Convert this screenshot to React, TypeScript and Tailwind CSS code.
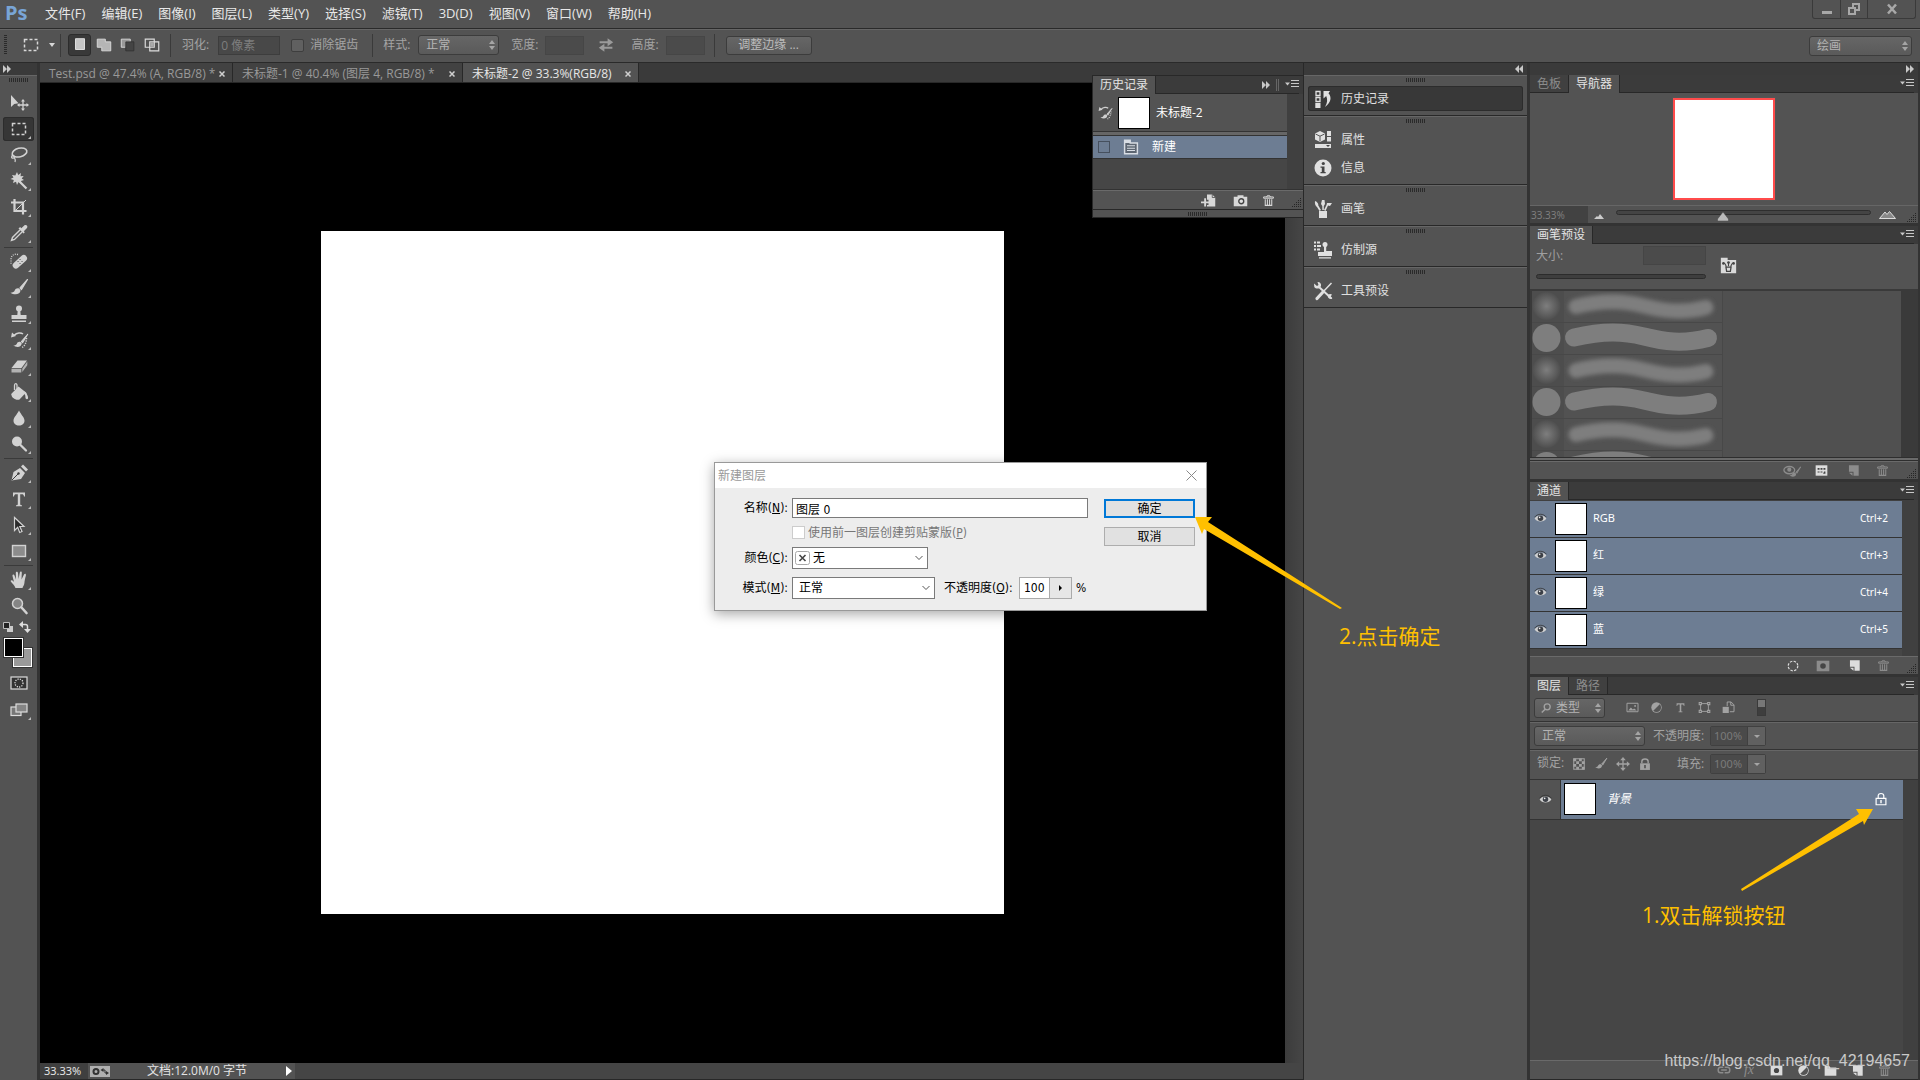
import type { ReactNode } from 'react'
import clsx from 'clsx'

const MENUS = ['文件(F)', '编辑(E)', '图像(I)', '图层(L)', '类型(Y)', '选择(S)', '滤镜(T)', '3D(D)', '视图(V)', '窗口(W)', '帮助(H)']

const TABS = [
  { title: 'Test.psd @ 47.4% (A, RGB/8) *', width: 'w-[193px]' },
  { title: '未标题-1 @ 40.4% (图层 4, RGB/8) *', width: 'w-[230px]' },
  { title: '未标题-2 @ 33.3%(RGB/8)', width: 'w-[176px]', active: true },
]

const CHANNELS = [
  { name: 'RGB', key: 'Ctrl+2' },
  { name: '红', key: 'Ctrl+3' },
  { name: '绿', key: 'Ctrl+4' },
  { name: '蓝', key: 'Ctrl+5' },
]

function Svg({ children, className = 'size-5' }: { children: ReactNode; className?: string }) {
  return (
    <svg viewBox="0 0 20 20" className={clsx('shrink-0', className)} fill="currentColor" aria-hidden="true">
      {children}
    </svg>
  )
}

const line = { fill: 'none', stroke: 'currentColor' }

const brushShape = (
  <>
    <path d="M18.5 1.5 11 10l1.5 1.5z" stroke="currentColor" strokeWidth="1.2" strokeLinejoin="round" />
    <path d="M10 10.5c-2-.6-3.600.4-4.300 2-.6 1.500-1.900 2-4.200 2.200 2.500 1.800 6.300 2.300 8.500.6 1.500-1.200 1.400-2.600 1.400-3.400z" />
  </>
)

const icons: Record<string, ReactNode> = {
  move: (
    <>
      <path d="M2 2v12l3.200-3 4.300-.8z" />
      <path d="M14 7.500v9M9.500 12h9" {...line} strokeWidth="1.300" />
      <path d="m14 6 2 2.500h-4zM14 18l2-2.500h-4zM8 12l2.500-2v4zM20 12l-2.500-2v4z" />
    </>
  ),
  marquee: <rect x="3.500" y="4.500" width="13" height="11" {...line} strokeDasharray="3 2" strokeWidth="1.500" />,
  lasso: (
    <>
      <ellipse cx="10.500" cy="7.500" rx="7.500" ry="4.300" {...line} strokeWidth="1.600" transform="rotate(-14 10.500 7.500)" />
      <path d="M4 10.500c-2 .4-1.800 3 .3 2.600 1.800-.4 1.200-2.200 0-1.800M5.500 13c1 1.500 1.200 2.500.5 4" {...line} strokeWidth="1.300" />
    </>
  ),
  wand: (
    <>
      <path d="m8 1 1.200 3L12 2l-.5 3.300 3.200-.3-2 2.500 2.300 1.500-3 1 .5 3L9.500 11 8 14l-1-3.200L4 12l.8-3L1.500 8l3-1.500L3 4l3.300.5z" />
      <path d="m10 10 7.500 7.500" {...line} strokeWidth="2.200" />
    </>
  ),
  crop: (
    <>
      <path d="M5.500 2v12h12M2 5.500h12v12" {...line} strokeWidth="2.200" />
      <path d="m6 14 11-11" {...line} strokeWidth="1" />
    </>
  ),
  dropper: (
    <>
      <path d="m11 7-7.500 7.500L2.500 17.500l3-1L13 9" {...line} strokeWidth="1.400" />
      <path d="m9.500 5.500 5 5 1.300-1.300-1-1L18 5c1-1.300 0-3.500-2.200-3L12.300 5.300l-1.200-1.200z" />
    </>
  ),
  heal: (
    <>
      <rect x="2.500" y="6.500" width="17" height="6.500" rx="3.200" transform="rotate(-42 11 10)" />
      <path d="M9 9.500h.1M11 11.500h.1M11 7.500h.1M13 9.500h.1" stroke="#535353" strokeWidth="1.200" strokeLinecap="round" />
      <path d="M9 2.500C5 1.500 2 3.500 2 8v4" {...line} strokeDasharray="1 1.200" strokeWidth="1.300" />
    </>
  ),
  brush: brushShape,
  stamp: (
    <>
      <circle cx="10" cy="4.500" r="3" />
      <path d="M8.800 6h2.400l.5 5h5.800v4h-15v-4h5.800zM3 16.500h14V18H3z" />
    </>
  ),
  historyBrush: (
    <>
      <g transform="translate(3 3) scale(.85)">{brushShape}</g>
      <path d="M5 5.500c3-3 7-3 9-1.500" {...line} strokeWidth="1.500" />
      <path d="m2 7.500 1-5 4 3.500z" />
      <path d="M17.500 8c0 4-1.500 8-4.500 9.500" {...line} strokeDasharray="1.200 1.200" strokeWidth="1.500" />
    </>
  ),
  eraser: (
    <>
      <path d="m2.500 12 6-7.500h9.500L12.500 12z" />
      <path d="M2.500 12.800v3.700h9.800v-3.700zM13.300 12.400l5-7v3.800l-5 6.800z" opacity=".75" />
    </>
  ),
  bucket: (
    <>
      <path d="m9.500 4.500 7.500 6-6.500 7c-4 1.200-8-2-8.300-5.500z" />
      <path d="M8 10V3.500C8 1 5.500 1 5.500 3.500V8" {...line} strokeWidth="1.300" />
      <path d="M15 9.500c3 .5 3 3 3 3s1.500 2.500 1 4c-.6 1-2.200.8-2.500-.5-.2-1.500.3-3-1.500-4.500z" />
    </>
  ),
  drop: <path d="M10 2.500c2 4 5.500 7 5.500 10.200 0 3-2.500 4.800-5.500 4.800s-5.500-1.800-5.500-4.800C4.500 9.500 8 6.500 10 2.500z" />,
  dodge: (
    <>
      <circle cx="8" cy="7.500" r="5" />
      <path d="m11.500 11 5.500 5.500" {...line} strokeWidth="2.300" strokeLinecap="round" />
    </>
  ),
  pen: (
    <>
      <path d="M2.500 17.500 4.500 9l6.500-4 5 5-4 6z" />
      <path d="m12 3.500 2-2 5 5-2 2z" />
      <path d="m3 17 6-6" stroke="#3c3c3c" strokeWidth="1" />
      <circle cx="9.500" cy="10.500" r="1.200" fill="#3c3c3c" />
    </>
  ),
  type: <path d="M4 3.500h12v4h-1c-.2-1.700-.8-2.300-2.300-2.300h-1.500v9.800c0 1 .4 1.200 1.800 1.200v1H7v-1c1.400 0 1.800-.2 1.800-1.200V5.200H7.300C5.800 5.200 5.200 5.800 5 7.500H4z" />,
  path: <path d="M5.500 2.500v13l3.200-3.200 2 5.200 2.300-1-2.200-5h4.200z" fill="#2b2b2b" stroke="currentColor" strokeWidth="1.200" />,
  rect: <rect x="3.500" y="4.500" width="13" height="11" fill="#8c8c8c" stroke="currentColor" strokeWidth="1.400" />,
  hand: (
    <path d="M6.500 18c-1-3-3.500-4.500-5-7 .8-1.300 2.200-.5 3.500 1L3.500 6c-.3-1.800 1.500-2.200 2-.5L7 9.500 6.800 3c0-1.800 2-1.800 2.200 0l.6 6L10.800 2.600c.3-1.700 2.200-1.400 2 .3L12.500 9.500 15 4.600c.8-1.500 2.300-.8 1.900.8-.8 3-1.300 5-1.500 7.600-.2 2-1.400 3.500-1.900 5z" />
  ),
  zoom: (
    <>
      <circle cx="8.500" cy="7.500" r="5" fill="#858585" stroke="currentColor" strokeWidth="1.500" />
      <path d="m12.500 11.500 5 5.500" {...line} strokeWidth="2.600" strokeLinecap="round" />
    </>
  ),
  quickMask: (
    <>
      <rect x="2" y="4" width="16" height="12" fill="#333" stroke="currentColor" strokeWidth="1.200" />
      <circle cx="10" cy="10" r="4" {...line} strokeDasharray="1.200 1.200" strokeWidth="1.300" />
    </>
  ),
  screen: (
    <>
      <rect x="2" y="8" width="10" height="8.500" fill="#777" stroke="currentColor" strokeWidth="1.200" />
      <rect x="7" y="5" width="11" height="8" fill="#858585" stroke="currentColor" strokeWidth="1.200" />
    </>
  ),
  history: (
    <>
      <path d="M3 2.500h4v4H3zM3 8.500h4v4H3z" {...line} strokeWidth="1.300" />
      <path d="M2.300 14h5.200v5H2.300z" />
      <path d="M10.500 2H17l-1.500 2.300c3.500 4.200 2.500 9.200-3.500 13.700 2.500-4 2.700-8 1.200-11L10.500 9.500z" />
    </>
  ),
  props: (
    <>
      <path d="m7 1 5 2.500v6L7 12 2 9.500v-6z" />
      <path d="M2.500 4 7 6.200 11.500 4M7 6.200v5" fill="none" stroke="#555" />
      <path d="M14 1h4v5h-4zM14 7h4v4.500h-4zM2 14h16v4H2z" />
      <path d="M13 15h4l-2 2z" fill="#444" />
    </>
  ),
  info: (
    <>
      <circle cx="10" cy="10" r="8.500" />
      <path d="M7.500 8.500h4V14h1.200v1.300H7.500V14h1.300V9.800H7.500z" fill="#444" />
      <circle cx="10.300" cy="5.500" r="1.600" fill="#444" />
    </>
  ),
  brushes: (
    <>
      <path d="M6 12h8v7H6zM2 2c2.500 1 3.500 2.500 3.300 4.500L8 11 6.500 12 4 8C2.500 7 1.500 5 2 2zM9 1h2.500l.5 4-1.200 2v4H9.300V7L8 5zM14 4h5l-2 3-2-.5L12.500 12 11 11l2.500-5z" />
    </>
  ),
  clone: (
    <>
      <path d="M1 1.500h2v2H1zM4 1.500h3v2H4zM1 5h2v2H1zM4 5h4v2H4zM1 8.500h2v2H1zM4 8.500h3v2H4z" />
      <circle cx="12" cy="4.500" r="2.500" />
      <path d="M11 6h2.200v5H19v5H5v-4h6zM6 17.200h12v1.400H6z" />
    </>
  ),
  tools: (
    <>
      <path d="m6 6 12 11" {...line} strokeWidth="2" strokeLinecap="round" />
      <path d="M1 2.500 4 5l1.500-1L4.500 1C7 .8 8.500 3 8 5 7 8 3 8.500 1.300 6zM19 13.500c-2-1.500-4.500 0-4.200 2 .5 2.500 3.200 3 4.700 1.500l-2.500-.5z" />
      <path d="M18.500 2 9 12" {...line} strokeWidth="1.500" />
      <path d="m10.500 10.500-6.500 7" {...line} strokeWidth="3.200" strokeLinecap="round" />
    </>
  ),
  eye: (
    <>
      <path d="M1 10c3-6 15-6 18 0-3 6-15 6-18 0z" fill="#d0d0d0" />
      <circle cx="10" cy="9.500" r="4.200" fill="#3c4047" />
      <circle cx="8.700" cy="8.200" r="1.300" fill="#eee" />
      <path d="M1 8c4-6 14-6 18 0" fill="none" stroke="#333" strokeWidth="1.200" />
    </>
  ),
  trash: (
    <>
      <path d="M2.500 4.500h15v2h-15zM7 4.500c0-3 6-3 6 0" {...line} strokeWidth="1.500" />
      <path d="M5 8v9.500h10V8M8.300 8v9M11.700 8v9" {...line} strokeWidth="1.600" />
    </>
  ),
  page: <path d="M3 2h15v16h-8v-6H3zM3 13.500h5.500V18z" />,
  mask: (
    <>
      <path d="M1 2.500h18v15H1z" />
      <circle cx="10" cy="10" r="4" fill="#454545" />
    </>
  ),
  lock: (
    <>
      <path d="M5.500 9V6.500c0-5 9-5 9 0V9" {...line} strokeWidth="2" />
      <path d="M3 9h14v9.500H3z" />
      <path d="M9 11.500h2V16H9z" fill="#444" />
    </>
  ),
  lockOutline: (
    <>
      <path d="M6 9V5.500c0-4.500 8-4.500 8 0V9M3 9.200h14v9H3z" {...line} strokeWidth="1.700" />
      <path d="M9 11.500h2V16H9z" />
    </>
  ),
  picture: (
    <>
      <path d="M1.500 3.500h17v13h-17z" {...line} strokeWidth="1.500" />
      <path d="m3.500 14.500 4-4.500 3 3 2-1.500 4 3z" />
      <circle cx="14" cy="7.500" r="1.500" />
    </>
  ),
  adjust: (
    <>
      <circle cx="10" cy="10" r="8" />
      <path d="M15 5A7 7 0 0 1 5 15z" fill="#555" />
    </>
  ),
  shape: (
    <>
      <path d="M4 4h12v12H4z" {...line} strokeWidth="1.400" />
      <path d="M1 1.500h5v5H1zM14 1.500h5v5h-5zM1 13.500h5v5H1zM14 13.500h5v5h-5z" />
      <path d="M2.700 3.200h1.600v1.600H2.700zM15.700 3.200h1.600v1.600h-1.600zM2.700 15.200h1.600v1.600H2.700zM15.700 15.200h1.600v1.600h-1.600z" fill="#535353" />
    </>
  ),
  smart: (
    <>
      <path d="M8 8V1.500h6l4.500 4.500v10.500H12M13.500 1.500V6.500h5" {...line} strokeWidth="1.500" />
      <path d="M1 9h9.500v9.500H1z" />
    </>
  ),
  checker: (
    <>
      <path d="M2.500 2.500h15v15h-15z" {...line} strokeWidth="1.500" />
      <path d="M2 2h4v4H2zM10 2h4v4h-4zM6 6h4v4H6zM14 6h4v4h-4zM2 10h4v4H2zM10 10h4v4h-4zM6 14h4v4H6zM14 14h4v4h-4z" />
    </>
  ),
  moveAll: (
    <>
      <path d="M10 3v14M3 10h14" {...line} strokeWidth="1.800" />
      <path d="m10 0 4 4.500H6zM10 20l4-4.500H6zM0 10l4.500-4v8zM20 10l-4.500-4v8z" />
    </>
  ),
  dashedCircle: <circle cx="10" cy="10" r="8" {...line} strokeDasharray="4 2.300" strokeWidth="2" />,
  folder: <path d="M1 3h7l2 2.500h9V18H1z" />,
  link: (
    <path d="M9 6H5C.5 6 .5 14 5 14h4M11 6h4c4.500 0 4.500 8 0 8h-4M6 10h8" {...line} strokeWidth="2" />
  ),
  eyeBrush: (
    <>
      <ellipse cx="7" cy="9" rx="6" ry="4" {...line} strokeWidth="1.500" />
      <circle cx="7" cy="8.500" r="2.300" />
      <g transform="translate(6 4) scale(.75)">{brushShape}</g>
    </>
  ),
  presetPage: (
    <>
      <path d="M1 2h18v16H1z" />
      <path d="M4 6h3v3H4zM8.500 6h3v3h-3zM13 6h3v3h-3zM4 11.500h3V13H4zM8.500 11.500h3V13h-3zM14 11.500h2V15h-3.500z" fill="#444" />
    </>
  ),
  brushFolder: (
    <>
      <path d="M1 1h8v2.500h10V19H1z" />
      <path d="M7 12h6l-.8 5H7.800z" fill="none" stroke="#444" strokeWidth="1.500" />
      <path d="M4 7c2 0 2.500 1 3.500 4.500M10 6v5M16 7c-2 0-2.500 1-3.500 4.500" fill="none" stroke="#444" strokeWidth="1.300" />
      <circle cx="4" cy="7.500" r="1.500" fill="#444" />
      <circle cx="10" cy="6.500" r="1.600" fill="#444" />
      <circle cx="16" cy="7.500" r="1.500" fill="#444" />
    </>
  ),
  camera: (
    <>
      <path d="M1 5h5V3h8v2h5v12.500H1z" />
      <circle cx="11" cy="11" r="3.300" fill="#e0e0e0" stroke="#444" strokeWidth="1.800" />
    </>
  ),
  newDoc: (
    <>
      <path d="M8 2h7l4 4v12H8v-2h2v-7H8z" />
      <path d="M15 2v4h4" fill="none" stroke="#444" />
      <path d="M5.500 7v11M0 12.500h11" {...line} strokeWidth="2.500" />
    </>
  ),
  sheet: (
    <>
      <path d="M2 1.500h7V5h9v13.500H2z" fill="#5d6672" stroke="currentColor" strokeWidth="1.800" />
      <path d="M2 1.500h7V5H2z" />
      <path d="M5 8.500h10M5 11.500h10M5 14.500h10" {...line} strokeWidth="1.300" />
    </>
  ),
  search: (
    <>
      <circle cx="12" cy="8" r="5" {...line} strokeWidth="2.200" />
      <path d="m8.500 12-5.500 5.500" {...line} strokeWidth="2.500" />
    </>
  ),
  swap: (
    <>
      <path d="M2 6.500h12M18 13.500H6" {...line} strokeWidth="2.400" />
      <path d="m12 1.500 7 5-7 5zM8 8.500l-7 5 7 5z" />
    </>
  ),
}

const TOOL_GROUPS = [
  [
    { id: 'move', label: '移动工具' },
    { id: 'marquee', label: '矩形选框工具', more: true, active: true },
    { id: 'lasso', label: '套索工具', more: true },
    { id: 'wand', label: '魔棒工具', more: true },
    { id: 'crop', label: '裁剪工具', more: true },
    { id: 'dropper', label: '吸管工具', more: true },
  ],
  [
    { id: 'heal', label: '修复画笔工具', more: true },
    { id: 'brush', label: '画笔工具', more: true },
    { id: 'stamp', label: '仿制图章工具', more: true },
    { id: 'historyBrush', label: '历史记录画笔工具', more: true },
    { id: 'eraser', label: '橡皮擦工具', more: true },
    { id: 'bucket', label: '油漆桶工具', more: true },
    { id: 'drop', label: '模糊工具', more: true },
    { id: 'dodge', label: '减淡工具', more: true },
  ],
  [
    { id: 'pen', label: '钢笔工具', more: true },
    { id: 'type', label: '文字工具', more: true },
    { id: 'path', label: '路径选择工具', more: true },
    { id: 'rect', label: '矩形工具', more: true },
  ],
  [
    { id: 'hand', label: '抓手工具', more: true },
    { id: 'zoom', label: '缩放工具' },
  ],
]

const DOCK = [
  [{ id: 'history', label: '历史记录', active: true }],
  [{ id: 'props', label: '属性' }, { id: 'info', label: '信息' }],
  [{ id: 'brushes', label: '画笔' }],
  [{ id: 'clone', label: '仿制源' }],
  [{ id: 'tools', label: '工具预设' }],
]

function Grip() {
  return <div className="h-[4px] w-[20px] bg-[repeating-linear-gradient(90deg,#2a2a2a_0_1px,transparent_1px_2px)]" />
}

function Chevrons({ left }: { left?: boolean }) {
  return (
    <svg viewBox="0 0 8 8" className="h-[8px] w-[8px]" fill="#c8c8c8" aria-hidden="true">
      {left ? <path d="M4 0v8L0 4zM8 0v8L4 4z" /> : <path d="M0 0v8l4-4zM4 0v8l4-4z" />}
    </svg>
  )
}

function PanelMenu() {
  return (
    <button aria-label="面板菜单" className="flex h-[14px] w-[14px] items-center">
      <svg viewBox="0 0 14 9" className="h-[9px] w-[14px]" aria-hidden="true">
        <path d="M0 2.500h5L2.500 5.500z" fill="#c8c8c8" />
        <path d="M6 .5h8M6 3.500h8M6 6.500h8" stroke="#c8c8c8" />
      </svg>
    </button>
  )
}

function Resize() {
  return (
    <svg viewBox="0 0 10 10" className="h-[10px] w-[10px]" fill="#262626" aria-hidden="true">
      <path d="M8 0h1v1H8zM6 2h1v1H6zM8 2h1v1H8zM4 4h1v1H4zM6 4h1v1H6zM8 4h1v1H8zM2 6h1v1H2zM4 6h1v1H4zM6 6h1v1H6zM8 6h1v1H8zM0 8h1v1H0zM2 8h1v1H2zM4 8h1v1H4zM6 8h1v1H6zM8 8h1v1H8z" />
    </svg>
  )
}

function PanelTabs({ tabs, active = 0, children }: { tabs: string[]; active?: number; children?: ReactNode }) {
  return (
    <div className="flex h-[18px] shrink-0 items-stretch bg-[#3b3b3b] pr-1">
      {tabs.map((t, i) => (
        <button
          key={t}
          className={clsx(
            'border-r border-[#282828] px-[7px] leading-4',
            i === active ? 'bg-[#535353] text-[#e4e4e4]' : 'border-b bg-[#404040] text-[#8c8c8c]'
          )}
        >
          {t}
        </button>
      ))}
      <div className="flex flex-1 items-center justify-end border-b border-[#282828]">
        {children}
        <PanelMenu />
      </div>
    </div>
  )
}

function Updown() {
  return (
    <svg viewBox="0 0 6 10" className="pointer-events-none absolute top-1/2 right-1 h-[10px] w-[6px] -translate-y-1/2" fill="#a5a5a5" aria-hidden="true">
      <path d="M3 0l3 4H0zM3 10l3-4H0z" />
    </svg>
  )
}

function DarkSelect({ label, value, className, pad = 'pl-[7px]' }: { label: string; value: string; className: string; pad?: string }) {
  return (
    <div className={clsx('relative', className)}>
      <select
        aria-label={label}
        className={clsx('h-[20px] w-full appearance-none rounded-[3px] border border-[#3c3c3c] bg-linear-to-b from-[#666] to-[#5a5a5a] leading-4 text-[#b4b4b4]', pad)}
      >
        <option>{value}</option>
      </select>
      <Updown />
    </div>
  )
}

function PanelFooter({ children, className }: { children: ReactNode; className?: string }) {
  return (
    <div className={clsx('flex shrink-0 items-center justify-end border-t border-[#6a6a6a] bg-[#535353] text-[#8c8c8c]', className ?? 'h-[18px]')}>
      {children}
    </div>
  )
}

function MenuBar() {
  return (
    <header className="flex h-[29px] shrink-0 items-center justify-between border-b border-[#2a2a2a] pr-1">
      <div className="flex items-center pb-[2px]">
        <span className="w-[45px] pl-[5px] font-['Open_Sans',sans-serif] text-[20px] leading-6 font-bold text-[#79a5d6]">Ps</span>
        <nav className="flex gap-4 text-[13px] text-[#e8e8e8]">
          {MENUS.map(m => (
            <button key={m} className="leading-5">{m}</button>
          ))}
        </nav>
      </div>
      <div className="flex h-[19px] self-start rounded-b-[3px] border border-t-0 border-[#3a3a3a] text-[#a8a8a8]">
        <button aria-label="最小化" className="flex w-[28px] items-end justify-center border-r border-[#3a3a3a] pb-1">
          <span className="h-[3px] w-[10px] bg-[#a8a8a8]" />
        </button>
        <button aria-label="还原" className="flex w-[27px] items-center justify-center border-r border-[#3a3a3a]">
          <svg viewBox="0 0 12 12" className="size-3" fill="none" stroke="currentColor" strokeWidth="2" aria-hidden="true">
            <path d="M1 5h6v6H1zM5 4V1h6v6H8" />
          </svg>
        </button>
        <button aria-label="关闭" className="flex w-[47px] items-center justify-center">
          <svg viewBox="0 0 12 12" className="size-3" fill="none" stroke="currentColor" strokeWidth="2.500" aria-hidden="true">
            <path d="m2 1.500 8 9M10 1.500l-8 9" />
          </svg>
        </button>
      </div>
    </header>
  )
}

function Divider() {
  return <div className="h-[23px] w-px bg-[#3a3a3a]" />
}

const MODES = [
  { label: '新选区', art: <path d="M5 3h10v12H5z" fill="#c4c4c4" stroke="#e6e6e6" /> },
  { label: '添加到选区', art: <path d="M2.500 3.500h9v3h6v10h-10v-4h-5z" fill="#b5b5b5" stroke="#ddd" /> },
  { label: '从选区减去', art: <><path d="M2.500 3.500h10v3h-5v6h-5z" fill="#999" stroke="#ddd" /><path d="M7.500 6.500h9v10h-9z" fill="#444" stroke="#333" /></> },
  { label: '与选区交叉', art: <><path d="M2.500 3.500h10v9h-10zM7.500 6.500h10v10h-10z" fill="none" stroke="#ddd" strokeWidth="1.300" /><path d="M8 7h4v5H8z" fill="#aaa" /></> },
]

function OptionsBar() {
  return (
    <div className="flex h-[34px] shrink-0 items-center justify-between border-t border-b border-t-[#666] border-b-[#2a2a2a] pr-2 text-[#a4a4a4]">
      <div className="flex items-center pb-[2px]">
        <div className="ml-[4px] h-[20px] w-[3px] bg-[repeating-linear-gradient(180deg,#2a2a2a_0_1px,transparent_1px_2px)]" />
        <button aria-label="工具预设选取器" className="mr-[5px] ml-[14px] flex items-center gap-[8px] text-[#d8d8d8]">
          <Svg>{icons.marquee}</Svg>
          <svg viewBox="0 0 6 4" className="h-[4px] w-[6px]" fill="currentColor" aria-hidden="true"><path d="M0 0h6L3 4z" /></svg>
        </button>
        <Divider />
        <div className="mx-[7px] flex gap-[1px]">
          {MODES.map((m, i) => (
            <button
              key={m.label}
              aria-label={m.label}
              className={clsx('flex h-[22px] w-[23px] items-center justify-center rounded-[3px]', i === 0 && 'border border-[#2c2c2c] bg-[#393939]')}
            >
              <svg viewBox="0 0 20 20" className="h-[18px] w-[18px]" aria-hidden="true">{m.art}</svg>
            </button>
          ))}
        </div>
        <Divider />
        <label className="ml-[11px] flex items-center gap-[9px]">
          羽化:
          <input defaultValue="0 像素" className="h-[19px] w-[62px] border border-[#3d3d3d] bg-[#484848] px-[2px] text-[#7e7e7e]" />
        </label>
        <label className="mr-[14px] ml-[11px] flex items-center gap-[6px]">
          <input type="checkbox" disabled className="size-[13px] appearance-none rounded-[2px] border border-[#3e3e3e] bg-[#606060]" />
          消除锯齿
        </label>
        <Divider />
        <span className="mr-[8px] ml-[10px]">样式:</span>
        <DarkSelect label="样式" value="正常" className="w-[81px]" />
        <label className="ml-[12px] flex items-center gap-[7px]">
          宽度:
          <input className="h-[19px] w-[39px] border border-[#464646] bg-[#4b4b4b]" />
        </label>
        <button aria-label="高度和宽度互换" className="mr-[17px] ml-[14px] text-[#9a9a9a]"><Svg className="size-4">{icons.swap}</Svg></button>
        <label className="flex items-center gap-[7px]">
          高度:
          <input className="h-[19px] w-[39px] border border-[#464646] bg-[#4b4b4b]" />
        </label>
        <div className="mr-[11px] ml-[9px]"><Divider /></div>
        <button className="h-[19px] w-[86px] rounded-[3px] border border-[#3c3c3c] bg-linear-to-b from-[#666] to-[#5a5a5a] leading-4 text-[#bcbcbc]">调整边缘 ...</button>
      </div>
      <DarkSelect label="工作区" value="绘画" className="w-[103px]" />
    </div>
  )
}

function Toolbar() {
  return (
    <aside className="flex w-[40px] shrink-0 flex-col border-r-[3px] border-[#333] bg-[#535353]">
      <div className="flex h-[12px] items-center bg-[#3a3a3a] pl-[3px]"><Chevrons /></div>
      <div className="flex h-[15px] items-start justify-center border-t border-[#666] pt-[2px]"><Grip /></div>
      {TOOL_GROUPS.map((group, g) => (
        <div key={g} className="flex flex-col">
          {g > 0 && <div className="mx-[4px] my-[1px] h-px bg-[#3a3a3a]" />}
          {group.map(t => (
            <button
              key={t.id}
              aria-label={t.label}
              className={clsx(
                'relative mx-[3px] my-[1px] flex h-[24px] w-[31px] items-center justify-center rounded-[3px] text-[#d2d2d2]',
                t.active && 'bg-[#363636] ring-1 ring-[#2c2c2c] ring-inset'
              )}
            >
              <Svg className="size-5">{icons[t.id]}</Svg>
              {t.more && (
                <svg viewBox="0 0 3 3" className="absolute right-[3px] bottom-[2px] h-[3px] w-[3px]" fill="#bbb" aria-hidden="true"><path d="M3 0v3H0z" /></svg>
              )}
            </button>
          ))}
        </div>
      ))}
      <div className="flex h-[16px] items-center justify-between px-[3px] text-[#ddd]">
        <button aria-label="默认前景色和背景色">
          <svg viewBox="0 0 10 10" className="size-[10px]" aria-hidden="true"><path d="M4 4h6v6H4z" fill="#ccc" /><path d="M.5.5h6v6h-6z" fill="#222" stroke="#bbb" /></svg>
        </button>
        <button aria-label="切换前景色和背景色" className="pr-[3px]">
          <svg viewBox="0 0 12 12" className="size-3" fill="currentColor" aria-hidden="true"><path d="M3 3.500h3.500c1.500 0 2 1 2 2V8" fill="none" stroke="currentColor" strokeWidth="1.500" /><path d="M0 3.500 4 0v7zM8.500 12 5 8h7z" /></svg>
        </button>
      </div>
      <div className="relative mx-[3px] mt-[3px] mb-[4px] h-[29px]">
        <button aria-label="背景色" className="absolute right-[2px] bottom-0 size-[19px] border border-white bg-[#9a9a9a] outline outline-[#333]" />
        <button aria-label="前景色" className="absolute top-0 left-[1px] size-[19px] border border-white bg-black outline outline-[#333]" />
      </div>
      <button aria-label="快速蒙版" className="flex h-[24px] items-center justify-center text-[#dcdcdc]"><Svg className="size-5">{icons.quickMask}</Svg></button>
      <button aria-label="屏幕模式" className="relative flex h-[28px] items-center justify-center text-[#dcdcdc]">
        <Svg className="size-5">{icons.screen}</Svg>
        <svg viewBox="0 0 3 3" className="absolute right-[6px] bottom-[3px] h-[3px] w-[3px]" fill="#bbb" aria-hidden="true"><path d="M3 0v3H0z" /></svg>
      </button>
    </aside>
  )
}

function HistoryPanel() {
  return (
    <section className="absolute top-[12px] right-0 flex w-[211px] flex-col border border-r-0 border-[#282828] bg-[#535353]">
      <PanelTabs tabs={['历史记录']}>
        <Chevrons />
        <div className="mx-[6px] h-[12px] w-[3px] border-x border-[#666]" />
      </PanelTabs>
      <div className="flex border-b border-[#333] bg-[#404040]">
        <div className="mr-[16px] flex-1 bg-[#464646] text-white">
          <div className="flex h-[37px] items-center bg-[#535353] pl-[4px]">
            <Svg className="size-4 text-[#d0d0d0]">{icons.historyBrush}</Svg>
            <div className="mr-[6px] ml-[5px] size-[32px] border border-black bg-white" />
            未标题-2
          </div>
          <div className="h-[5px] border-y border-[#333] bg-[#666]" />
          <div className="flex h-[23px] items-center border-b border-[#333] bg-[#6d7d93] pl-[5px]">
            <input type="checkbox" aria-label="历史记录画笔的源" className="size-[12px] appearance-none border border-[#46505e] bg-[#6d7d93]" />
            <Svg className="mr-[13px] ml-[13px] size-4 text-[#d8dde4]">{icons.sheet}</Svg>
            新建
          </div>
          <div className="h-[30px]" />
        </div>
      </div>
      <PanelFooter className="h-[19px] text-[#d8d8d8]">
        <button aria-label="从当前状态创建新文档"><Svg className="size-[15px]">{icons.newDoc}</Svg></button>
        <button aria-label="创建新快照" className="ml-[17px]"><Svg className="size-[15px]">{icons.camera}</Svg></button>
        <button aria-label="删除" className="mr-[17px] ml-[14px]"><Svg className="size-[13px]">{icons.trash}</Svg></button>
        <div className="mt-[6px] mr-px"><Resize /></div>
      </PanelFooter>
      <div className="flex h-[8px] items-center justify-center border-t border-[#282828]"><Grip /></div>
    </section>
  )
}

function DocumentArea() {
  return (
    <main className="relative flex min-w-0 flex-1 flex-col bg-[#3a3a3a]">
      <div className="flex h-[20px] shrink-0 border-b border-[#282828]">
        {TABS.map(t => (
          <div
            key={t.title}
            className={clsx(
              'flex items-center justify-between border-r border-[#282828] pt-[2px] pr-[7px] pl-[9px] whitespace-nowrap',
              t.width,
              t.active ? 'bg-[#535353] text-[#e6e6e6]' : 'bg-[#424242] text-[#999]'
            )}
          >
            <button className="text-[12px] leading-4">{t.title}</button>
            <button aria-label="关闭标签">
              <svg viewBox="0 0 6 6" className="size-[6px]" stroke="#d0d0d0" strokeWidth="1.500" aria-hidden="true"><path d="m.5.5 5 5M5.500.5l-5 5" /></svg>
            </button>
          </div>
        ))}
      </div>
      <div className="flex min-h-0 flex-1">
        <div className="flex min-w-0 flex-1 items-center justify-center bg-black pb-px">
          <div className="aspect-square w-[683px] bg-white" />
        </div>
        <div className="w-[18px] bg-linear-to-r from-[#3c3c3c] to-[#464646]" />
      </div>
      <div className="flex h-[17px] shrink-0 items-stretch border-b border-[#282828] bg-[#454545] text-[#e4e4e4]">
        <div className="flex w-[48px] items-center bg-[#3f3f3f] pl-[4px] font-['Noto_Sans',sans-serif] text-[11px] leading-4">33.33%</div>
        <div className="flex w-[207px] items-center bg-[#535353] pr-[3px] pl-[2px]">
          <svg viewBox="0 0 20 11" className="h-[11px] w-[20px]" aria-hidden="true">
            <path d="M0 0h20v11H0z" fill="#b0b0b0" />
            <circle cx="6" cy="5.500" r="2.500" fill="none" stroke="#333" strokeWidth="2" />
            <path d="m10.500 4 3-2v4zM19 7l-3 2V5z" fill="#333" />
            <path d="M13 4h2v3h2" fill="none" stroke="#333" />
          </svg>
          <span className="ml-[37px] flex-1 leading-4 whitespace-nowrap">文档:12.0M/0 字节</span>
          <svg viewBox="0 0 6 10" className="h-[10px] w-[6px]" fill="#fff" aria-hidden="true"><path d="M0 0l6 5-6 5z" /></svg>
        </div>
      </div>
      <HistoryPanel />
    </main>
  )
}

function Dock() {
  return (
    <aside className="flex w-[224px] shrink-0 flex-col border-l border-[#282828] bg-[#535353] text-[#e0e0e0]">
      <div className="flex h-[12px] items-center justify-end bg-[#3a3a3a] pr-[4px]"><Chevrons left /></div>
      {DOCK.map((items, i) => (
        <div key={i} className="flex flex-col items-stretch border-t border-b border-t-[#666] border-b-[#282828] px-[4px] pt-[2px] pb-[4px]">
          <div className="mb-[4px] flex justify-center"><Grip /></div>
          <div className="flex flex-col gap-[3px]">
            {items.map(it => (
              <button
                key={it.label}
                className={clsx('flex h-[25px] items-center gap-[8px] rounded-[3px] pl-[5px]', it.active && 'bg-[#383838] ring-1 ring-[#2c2c2c] ring-inset')}
              >
                <Svg className="size-5">{icons[it.id]}</Svg>
                <span className="leading-4">{it.label}</span>
              </button>
            ))}
          </div>
        </div>
      ))}
    </aside>
  )
}

function Navigator() {
  return (
    <section>
      <PanelTabs tabs={['色板', '导航器']} active={1} />
      <div className="flex h-[112px] justify-center bg-[#535353] pt-[4px]">
        <div className="mt-px size-[102px] border-2 border-[#ff4b4b] bg-white outline outline-[#555]" />
      </div>
      <div className="flex h-[18px] items-center border-t border-[#666] bg-[#535353]">
        <input aria-label="缩放" defaultValue="33.33%" className="h-[17px] w-[58px] bg-[#424242] pl-px font-['Noto_Sans',sans-serif] text-[10px] text-[#7e7e7e]" />
        <svg viewBox="0 0 10 5" className="mt-[3px] mr-[12px] ml-[6px] h-[5px] w-[10px]" fill="#ccc" aria-hidden="true"><path d="M0 5l3-3 1 1 2-3 4 5z" /></svg>
        <div className="relative mb-[4px] flex flex-1 items-start">
          <div className="h-[5px] w-full rounded-full border border-[#2e2e2e] bg-[#444]" />
          <input type="range" aria-label="缩放级别" defaultValue={42} className="absolute inset-0 h-[5px] w-full opacity-0" />
          <svg viewBox="0 0 11 9" className="pointer-events-none absolute top-[2px] left-[42%] h-[9px] w-[11px] -translate-x-1/2" aria-hidden="true">
            <path d="M5.500 0 11 7v2H0V7z" fill="#bbb" stroke="#444" strokeWidth=".5" />
          </svg>
        </div>
        <svg viewBox="0 0 17 8" className="mr-[11px] ml-[8px] h-[8px] w-[17px]" fill="#888" stroke="#ddd" aria-hidden="true"><path d="M.5 7.500 6 1l2 2.500L10.500.5l6 7z" /></svg>
        <div className="mt-[6px] mr-px"><Resize /></div>
      </div>
    </section>
  )
}

function BrushRow({ soft }: { soft: boolean }) {
  return (
    <div className="flex h-[32px] w-[191px] shrink-0 border-r border-b border-[#484848] bg-[#525252]">
      <svg viewBox="0 0 190 31" className="h-[31px] w-[190px]" aria-hidden="true">
        <defs>
          <radialGradient id="softDot">
            <stop offset="0" stopColor="#7e7e7e" />
            <stop offset="1" stopColor="#4f4f4f" />
          </radialGradient>
          <filter id="softEdge" x="-10%" y="-100%" width="120%" height="300%"><feGaussianBlur stdDeviation="2.200" /></filter>
        </defs>
        <path d="M0 0h32v31H0z" fill="#4d4d4d" />
        <circle cx="14.500" cy="15" r="14" fill={soft ? 'url(#softDot)' : '#7e7e7e'} />
        <path
          d={soft ? 'M44 15.500C72 8.500 92 10 112 15s38 7.500 62 1.500' : 'M42 14.500C72 7.500 92 8.500 112 13.500s38 8 64 1.500'}
          fill="none"
          stroke="#7e7e7e"
          strokeLinecap="round"
          strokeWidth={soft ? 15 : 18}
          filter={soft ? 'url(#softEdge)' : undefined}
        />
      </svg>
    </div>
  )
}

function BrushPresets() {
  return (
    <section>
      <PanelTabs tabs={['画笔预设']} />
      <div className="flex h-[47px] border-b-2 border-[#3a3a3a] bg-[#535353] pl-[6px]">
        <div className="flex w-[170px] flex-col gap-[8px] pt-[2px]">
          <label className="flex items-start justify-between leading-5 text-[#a0a0a0]">
            大小:
            <input className="h-[19px] w-[63px] border border-[#454545] bg-[#4b4b4b]" />
          </label>
          <div className="h-[5px] rounded-full border border-[#2c2c2c] bg-[#3e3e3e]" />
        </div>
        <button aria-label="打开预设管理器" className="ml-[14px] h-[16px] pt-[13px] text-[#dadada]"><Svg className="size-[17px]">{icons.brushFolder}</Svg></button>
      </div>
      <div className="flex h-[166px] bg-[#3a3a3a]">
        <div className="mr-[17px] ml-[2px] flex flex-1 flex-col overflow-hidden bg-[#505050]">
          {[true, false, true, false, true, false].map((soft, i) => <BrushRow key={i} soft={soft} />)}
        </div>
      </div>
      <div className="h-[4px] border-y border-[#2e2e2e] bg-[#6a6a6a]" />
      <PanelFooter>
        <button aria-label="切换实时笔尖画笔预览"><Svg className="size-[18px]">{icons.eyeBrush}</Svg></button>
        <button aria-label="预设管理器" className="ml-[14px] text-[#ddd]"><Svg className="size-[13px]">{icons.presetPage}</Svg></button>
        <button aria-label="创建新画笔" className="ml-[19px]"><Svg className="size-[13px]">{icons.page}</Svg></button>
        <button aria-label="删除画笔" className="mr-[18px] ml-[16px]"><Svg className="size-[13px]">{icons.trash}</Svg></button>
        <div className="mt-[6px] mr-px"><Resize /></div>
      </PanelFooter>
    </section>
  )
}

function Channels() {
  return (
    <section>
      <PanelTabs tabs={['通道']} />
      <div className="h-[156px] bg-[#404040] pt-px">
        <ul className="mr-[16px] h-full bg-[#464646] text-white">
          {CHANNELS.map(c => (
            <li key={c.name} className="flex h-[37px] items-center border-b border-[#333] bg-[#6d7d93] pr-[14px] pl-[4px]">
              <button aria-label="指示通道可见性" className="pb-[2px]"><Svg className="size-[13px]">{icons.eye}</Svg></button>
              <div className="mr-[6px] ml-[8px] size-[32px] border border-black bg-white" />
              <span className="flex-1 pb-[2px] font-['Noto_Sans','Noto_Sans_CJK_SC',sans-serif] text-[11px]">{c.name}</span>
              <span className="pb-[3px] font-['Noto_Sans',sans-serif] text-[10px]">{c.key}</span>
            </li>
          ))}
        </ul>
      </div>
      <PanelFooter>
        <button aria-label="将通道作为选区载入" className="text-[#ddd]"><Svg className="size-[12px]">{icons.dashedCircle}</Svg></button>
        <button aria-label="将选区存储为通道" className="ml-[17px]"><Svg className="size-[14px]">{icons.mask}</Svg></button>
        <button aria-label="创建新通道" className="ml-[18px] text-[#ddd]"><Svg className="size-[13px]">{icons.page}</Svg></button>
        <button aria-label="删除当前通道" className="mr-[17px] ml-[16px]"><Svg className="size-[13px]">{icons.trash}</Svg></button>
        <div className="mt-[6px] mr-px"><Resize /></div>
      </PanelFooter>
    </section>
  )
}

function Percent({ label }: { label: string }) {
  return (
    <div className="flex h-[20px] w-[56px] rounded-[2px] border border-[#404040]">
      <input aria-label={label} defaultValue="100%" className="w-[36px] bg-[#4a4a4a] pl-[3px] font-['Noto_Sans',sans-serif] text-[11px] text-[#7a7a7a]" />
      <button aria-label={`${label}滑块`} className="flex flex-1 items-center justify-center border-l border-[#404040] bg-[#606060]">
        <svg viewBox="0 0 6 3" className="h-[3px] w-[6px]" fill="#a5a5a5" aria-hidden="true"><path d="M0 0h6L3 3z" /></svg>
      </button>
    </div>
  )
}

function Layers() {
  return (
    <section className="flex min-h-0 flex-1 flex-col">
      <PanelTabs tabs={['图层', '路径']} />
      <div className="bg-[#535353] text-[#a2a2a2]">
        <div className="flex h-[27px] items-center border-b border-[#333] pb-px pl-[4px]">
          <div className="relative">
            <DarkSelect label="滤镜类型" value="类型" className="w-[71px]" pad="pl-[21px]" />
            <Svg className="pointer-events-none absolute top-[4px] left-[6px] size-[12px]">{icons.search}</Svg>
          </div>
          <div className="ml-[21px] flex gap-[11px]">
            {['picture', 'adjust', 'type', 'shape', 'smart'].map(id => (
              <button key={id} aria-label={`过滤 ${id}`}><Svg className="size-[13px]">{icons[id]}</Svg></button>
            ))}
          </div>
          <button aria-label="打开或关闭图层过滤" className="ml-[22px] h-[17px] w-[9px] border border-[#3a3a3a] bg-[#3e3e3e]">
            <span className="mb-[8px] block h-[7px] bg-[#777]" />
          </button>
        </div>
        <div className="flex h-[28px] items-center border-t border-b border-t-[#666] border-b-[#333] pl-[4px]">
          <DarkSelect label="混合模式" value="正常" className="w-[111px]" />
          <span className="w-[65px] pl-[8px]">不透明度:</span>
          <Percent label="不透明度" />
        </div>
        <div className="flex h-[30px] items-center border-t border-b border-t-[#666] border-b-[#333] pb-[2px] pl-[7px]">
          <span className="w-[35px] pb-[2px]">锁定:</span>
          <div className="flex gap-[8px]">
            {['checker', 'brush', 'moveAll', 'lock'].map(id => (
              <button key={id} aria-label={`锁定 ${id}`}><Svg className="size-[14px]">{icons[id]}</Svg></button>
            ))}
          </div>
          <span className="w-[58px] pl-[25px]">填充:</span>
          <Percent label="填充" />
        </div>
      </div>
      <div className="min-h-0 flex-1 bg-[#404040]">
        <div className="mr-[15px] h-full bg-[#464646]">
          <div className="flex h-[40px] border-b border-[#333] text-white">
            <button aria-label="指示图层可见性" className="flex w-[31px] items-center justify-center border-r border-[#333] bg-[#535353]"><Svg className="size-[13px]">{icons.eye}</Svg></button>
            <div className="flex flex-1 items-center bg-[#6d7d93] pr-[15px] pb-px pl-[3px]">
              <div className="size-[32px] border border-black bg-white" />
              <span className="flex-1 pl-[11px] italic">背景</span>
              <button aria-label="部分锁定"><Svg className="size-[14px]">{icons.lockOutline}</Svg></button>
            </div>
          </div>
        </div>
      </div>
      <PanelFooter className="h-[20px] border-b border-b-[#282828] pr-[27px]">
        <button aria-label="链接图层" className="mr-[13px]"><Svg className="size-[14px]">{icons.link}</Svg></button>
        <button aria-label="添加图层样式" className="mr-[16px] font-['Liberation_Serif',serif] text-[14px] leading-4 italic">fx</button>
        <div className="flex gap-[14px] text-[#dcdcdc]">
          <button aria-label="添加图层蒙版"><Svg className="size-[13px]">{icons.mask}</Svg></button>
          <button aria-label="创建新的填充或调整图层"><Svg className="size-[13px]">{icons.adjust}</Svg></button>
          <button aria-label="创建新组"><Svg className="size-[13px]">{icons.folder}</Svg></button>
          <button aria-label="创建新图层"><Svg className="size-[13px]">{icons.page}</Svg></button>
        </div>
        <button aria-label="删除图层" className="ml-[14px]"><Svg className="size-[13px]">{icons.trash}</Svg></button>
      </PanelFooter>
    </section>
  )
}

function Chevron() {
  return (
    <svg viewBox="0 0 8 5" className="pointer-events-none absolute top-1/2 right-[5px] h-[5px] w-[8px] -translate-y-1/2" fill="none" stroke="#555" aria-hidden="true">
      <path d="m.5.5 3.500 3.500L7.500.5" />
    </svg>
  )
}

function NewLayerDialog() {
  const field = 'border border-[#7a7a7a] bg-white'
  return (
    <form
      role="dialog"
      aria-label="新建图层"
      className="absolute top-[462px] left-[714px] w-[493px] border border-[#999] bg-[#ededed] font-['DejaVu_Sans_Condensed','Noto_Sans','Noto_Sans_CJK_SC',sans-serif] text-black shadow-[0_3px_12px_rgba(0,0,0,0.35)]"
      onSubmit={e => e.preventDefault()}
    >
      <div className="flex h-[25px] items-center justify-between bg-white pr-[9px] pl-[3px] text-[#999]">
        <h2 className="leading-4">新建图层</h2>
        <button type="button" aria-label="关闭">
          <svg viewBox="0 0 11 11" className="size-[11px]" fill="none" stroke="#888" aria-hidden="true"><path d="m.5.5 10 10m0-10-10 10" /></svg>
        </button>
      </div>
      <div className="flex justify-between pt-[10px] pr-[11px] pb-[11px]">
        <div className="grid grid-cols-[73px_296px] items-center gap-x-[4px] gap-y-[8px]">
          <label htmlFor="name" className="text-right leading-4">名称(<u>N</u>):</label>
          <input id="name" defaultValue="图层 0" className={clsx(field, 'h-[20px] px-[3px]')} />
          <label className="col-start-2 flex h-[13px] items-center gap-[3px] text-[#777]">
            <input type="checkbox" disabled className="size-[13px] appearance-none border border-[#ccc] bg-white" />
            <span>使用前一图层创建剪贴蒙版(<u>P</u>)</span>
          </label>
          <label htmlFor="color" className="text-right leading-4">颜色(<u>C</u>):</label>
          <div className="relative w-[136px]">
            <select id="color" className={clsx(field, 'h-[22px] w-full appearance-none pl-[20px]')}>
              <option>无</option>
            </select>
            <svg viewBox="0 0 15 14" className="pointer-events-none absolute top-[4px] left-[3px] h-[14px] w-[15px]" fill="none" aria-hidden="true">
              <rect x=".5" y=".5" width="14" height="13" rx="2" stroke="#aaa" />
              <path d="m4.500 4 6 6m0-6-6 6" stroke="#444" strokeWidth="1.600" />
            </svg>
            <Chevron />
          </div>
          <label htmlFor="mode" className="text-right leading-4">模式(<u>M</u>):</label>
          <div className="flex items-center">
            <div className="relative w-[143px]">
              <select id="mode" className={clsx(field, 'h-[22px] w-full appearance-none pl-[6px]')}>
                <option>正常</option>
              </select>
              <Chevron />
            </div>
            <label htmlFor="opacity" className="w-[84px] pl-[9px] whitespace-nowrap">不透明度(<u>O</u>):</label>
            <div className="flex h-[22px] border border-[#aaa]">
              <input id="opacity" defaultValue="100" className="w-[29px] bg-white pl-[4px]" />
              <button type="button" aria-label="不透明度滑块" className="flex w-[22px] items-center justify-center border-l border-[#aaa] bg-[#e6e6e6]">
                <svg viewBox="0 0 3 6" className="h-[6px] w-[3px]" aria-hidden="true"><path d="M0 0l3 3-3 3z" /></svg>
              </button>
            </div>
            <span className="pl-[4px]">%</span>
          </div>
        </div>
        <div className="flex w-[91px] flex-col gap-[9px] pt-px">
          <button className="h-[19px] border-2 border-[#0078d7] bg-[#e1e1e1] leading-4">确定</button>
          <button type="button" className="h-[19px] border border-[#adadad] bg-[#e1e1e1] leading-4">取消</button>
        </div>
      </div>
    </form>
  )
}

function Annotations() {
  return (
    <div className="pointer-events-none absolute inset-0 text-[21px] leading-8 text-[#ffc000]">
      <svg viewBox="0 0 1920 1080" className="absolute inset-0 h-full w-full" fill="#ffc000" aria-hidden="true">
        <path d="M1195 517l17 0-4 5 134 86-2 1-136-80-2 5z" />
        <path d="M1873 809l-17 0 3 5-118 75 1 2 121-70 1 4z" />
      </svg>
      <p className="absolute top-[620px] left-[1339px]">2.点击确定</p>
      <p className="absolute top-[899px] left-[1642px]">1.双击解锁按钮</p>
      <p className="absolute right-[10px] bottom-[3px] font-['Liberation_Sans',sans-serif] text-[16px] text-[#c9c9c9]">https://blog.csdn.net/qq_42194657</p>
    </div>
  )
}

export default function App() {
  return (
    <div className="relative flex h-screen flex-col overflow-hidden bg-[#535353] font-['Open_Sans','Noto_Sans_CJK_SC',sans-serif] text-[12px] leading-4">
      <MenuBar />
      <OptionsBar />
      <div className="flex min-h-0 flex-1">
        <Toolbar />
        <DocumentArea />
        <Dock />
        <aside className="flex w-[393px] shrink-0 flex-col bg-[#333] pr-[2px] pl-[3px]">
          <div className="flex h-[12px] shrink-0 items-center justify-end bg-[#3a3a3a] pr-[4px]"><Chevrons /></div>
          <div className="flex min-h-0 flex-1 flex-col gap-[3px]">
            <Navigator />
            <BrushPresets />
            <Channels />
            <Layers />
          </div>
        </aside>
      </div>
      <NewLayerDialog />
      <Annotations />
    </div>
  )
}
